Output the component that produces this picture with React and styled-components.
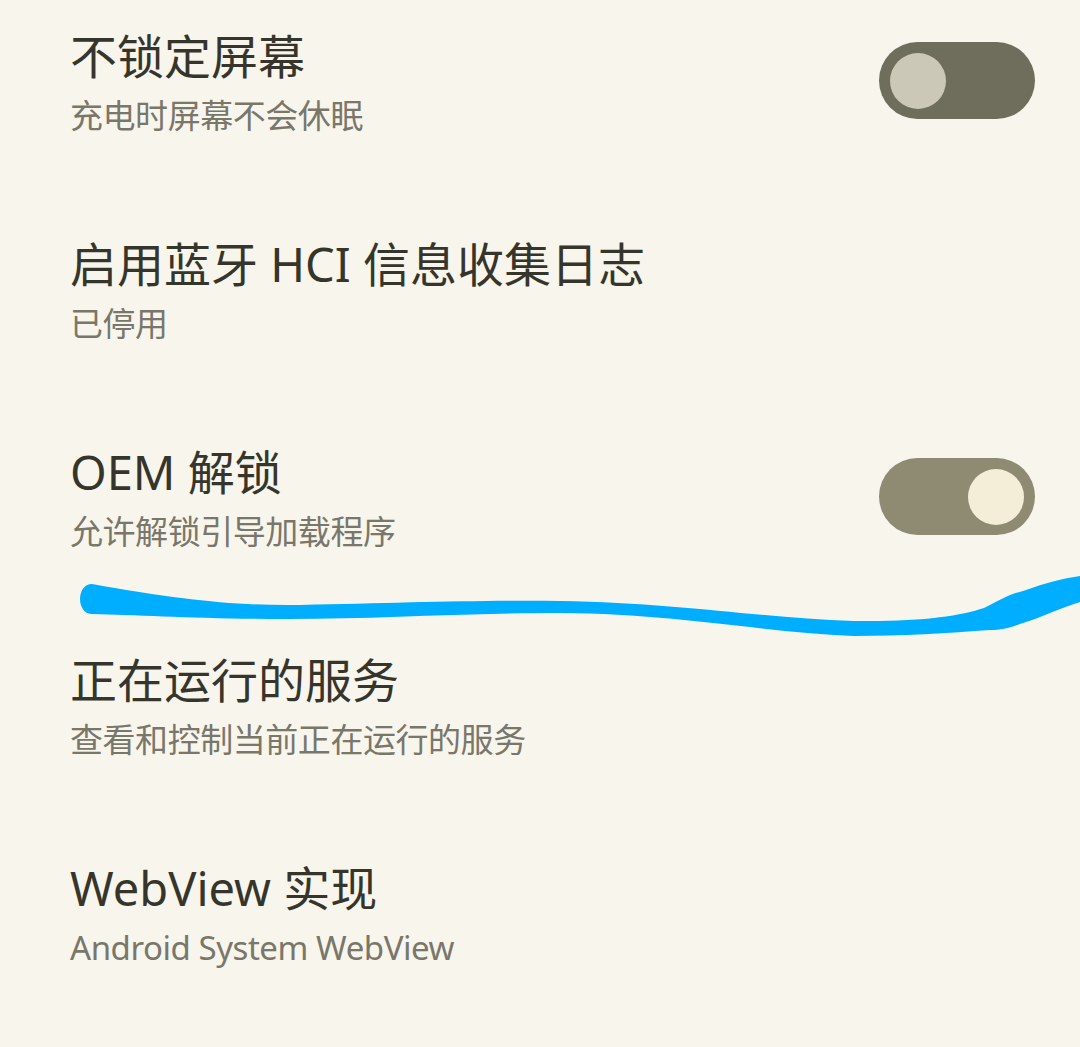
import React from "react";
import styled, { createGlobalStyle } from "styled-components";

const Global = createGlobalStyle`
  html, body { margin: 0; padding: 0; background: #f8f5ed; }
  body { overflow: hidden; }
`;

const Page = styled.div`
  position: relative;
  width: 1080px;
  height: 1047px;
  overflow: hidden;
  background: #f8f5ed;
  font-family: "Noto Sans", "Noto Sans CJK SC", sans-serif;
`;

const List = styled.div`
  display: flex;
  flex-direction: column;
  margin-top: -19px;
`;

const Row = styled.div`
  height: 208px;
  display: flex;
  align-items: center;
  justify-content: space-between;
  padding: 0 45px 0 70px;
  box-sizing: border-box;
`;

const Texts = styled.div`
  display: flex;
  flex-direction: column;
`;

const Title = styled.div`
  font-size: 47px;
  line-height: 62px;
  color: #36352c;
  white-space: nowrap;
`;

const Summary = styled.div`
  font-size: 33px;
  line-height: 58px;
  letter-spacing: -0.45px;
  color: #78776a;
  white-space: nowrap;
`;

const Track = styled.div`
  width: 156px;
  height: 77px;
  margin-bottom: 9px;
  border-radius: 39px;
  background: ${(p) => (p.$on ? "#8f8a72" : "#6f6d5c")};
  display: flex;
  align-items: center;
  justify-content: ${(p) => (p.$on ? "flex-end" : "flex-start")};
  padding: 0 11px;
  box-sizing: border-box;
  flex-shrink: 0;
`;

const Thumb = styled.div`
  width: 56px;
  height: 56px;
  border-radius: 50%;
  background: ${(p) => (p.$on ? "#f4eed8" : "#ccc8b8")};
`;

const Scribble = styled.svg`
  position: absolute;
  left: 0;
  top: 0;
  pointer-events: none;
`;

const items = [
  { title: "不锁定屏幕", summary: "充电时屏幕不会休眠", toggle: false },
  { title: "启用蓝牙 HCI 信息收集日志", summary: "已停用" },
  { title: "OEM 解锁", summary: "允许解锁引导加载程序", toggle: true },
  { title: "正在运行的服务", summary: "查看和控制当前正在运行的服务" },
  { title: "WebView 实现", summary: "Android System WebView" },
];

export default function App() {
  return (
    <Page>
      <Global />
      <List>
        {items.map((it) => (
          <Row key={it.title}>
            <Texts>
              <Title>{it.title}</Title>
              <Summary>{it.summary}</Summary>
            </Texts>
            {it.toggle !== undefined && (
              <Track $on={it.toggle}>
                <Thumb $on={it.toggle} />
              </Track>
            )}
          </Row>
        ))}
      </List>
      <Scribble width="1080" height="1047" viewBox="0 0 1080 1047">
        <path
          fill="#00aeff"
          d="M92,584 C180,600 240,606 300,605 C400,603 480,600 560,601 C680,603 760,618 854,621 C920,622 960,616 984,608 C1000,600 1010,594 1023,591 C1045,583 1065,578 1080,576 L1080,602 C1060,608 1040,618 1020,624 C1005,630 995,630 990,630 C950,633 900,636 854,636 C760,632 680,614 560,613 C460,613 380,619 288,619 C200,619 140,615 92,614 C76,614 76,584 92,584 Z"
        />
      </Scribble>
    </Page>
  );
}
